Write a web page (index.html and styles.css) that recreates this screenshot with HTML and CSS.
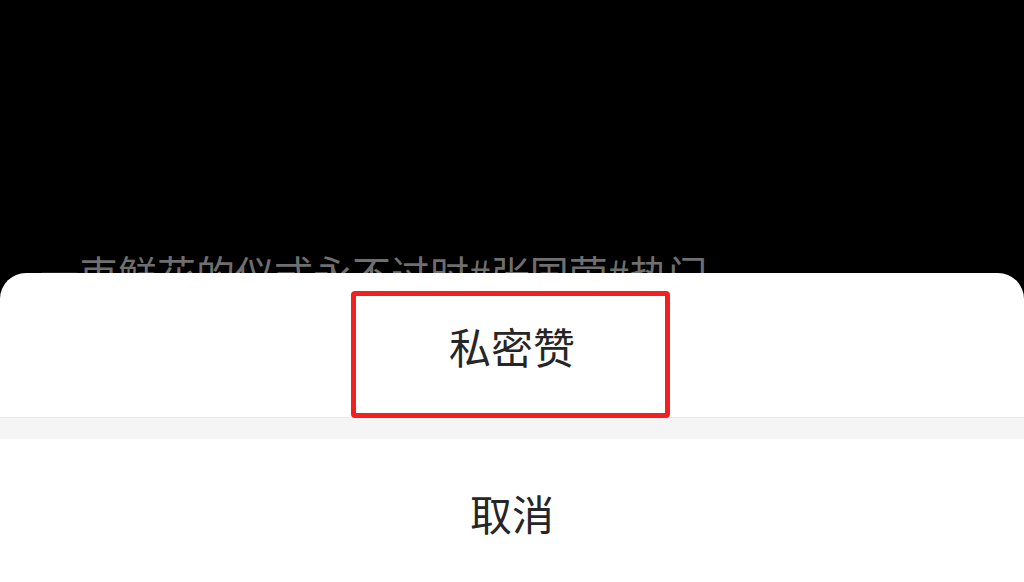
FILE: index.html
```html
<!DOCTYPE html>
<html lang="zh-CN">
<head>
<meta charset="utf-8">
<title>私密赞</title>
<link rel="stylesheet" href="styles.css">
</head>
<body>
<div class="stage">
  <div class="feed">
    <p class="caption">一束鲜花的仪式永不过时#张国荣#热门</p>
  </div>
  <div class="sheet">
    <div class="item item-first">私密赞</div>
    <div class="gap"></div>
    <div class="item item-cancel">取消</div>
    <div class="highlight"></div>
  </div>
</div>
</body>
</html>
```

FILE: styles.css
```css
html, body {
  margin: 0;
  padding: 0;
  background: #000;
}
body {
  font-family: "Noto Sans CJK SC", "Noto Sans", sans-serif;
}
.stage {
  width: 1024px;
  height: 582px;
  display: flex;
  flex-direction: column;
  overflow: hidden;
  background: #000;
}
.feed {
  height: 273px;
  flex: none;
  overflow: hidden;
  padding-left: 40px;
  box-sizing: border-box;
}
.caption {
  margin: 253px 0 0;
  font-size: 39px;
  line-height: 39px;
  color: #6f6f6f;
  white-space: nowrap;
}
.sheet {
  position: relative;
  flex: 1;
  display: flex;
  flex-direction: column;
  background: #fff;
  border-radius: 26px 26px 0 0;
}
.item {
  display: flex;
  align-items: center;
  justify-content: center;
  font-size: 42px;
  color: #262626;
}
.item-first {
  height: 144px;
  padding-top: 1px;
  box-sizing: border-box;
}
.gap {
  height: 21px;
  background: #f5f5f5;
  border-top: 1px solid #e8e8e8;
}
.item-cancel {
  flex: 1;
  padding-top: 4px;
}
.highlight {
  position: absolute;
  left: 351px;
  top: 18px;
  width: 319px;
  height: 127px;
  box-sizing: border-box;
  border: 5px solid #f42020;
  border-radius: 4px;
}
```
